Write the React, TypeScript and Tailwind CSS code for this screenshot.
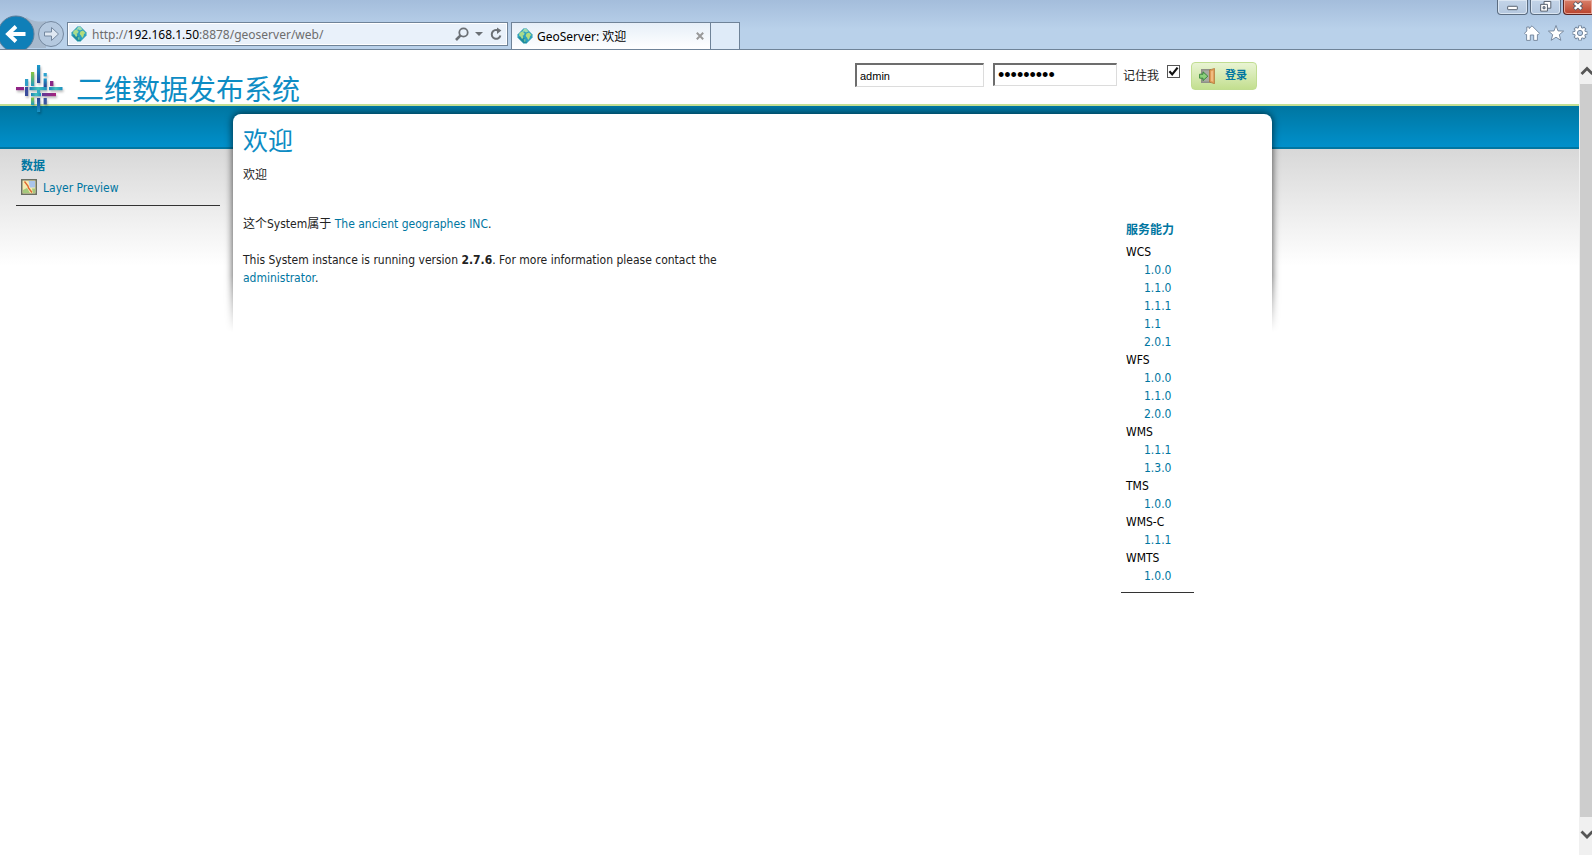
import { useState } from 'react'

type Service = {
  name: string
  versions: string[]
}

const services: Service[] = [
  { name: 'WCS', versions: ['1.0.0', '1.1.0', '1.1.1', '1.1', '2.0.1'] },
  { name: 'WFS', versions: ['1.0.0', '1.1.0', '2.0.0'] },
  { name: 'WMS', versions: ['1.1.1', '1.3.0'] },
  { name: 'TMS', versions: ['1.0.0'] },
  { name: 'WMS-C', versions: ['1.1.1'] },
  { name: 'WMTS', versions: ['1.0.0'] },
]

function GlobeIcon() {
  return (
    <svg viewBox="0 0 16 16" className="size-4 shrink-0" aria-hidden="true">
      <path d="M6.5 0.6 H9.5 L15.4 6.5 V9.5 L9.5 15.4 H6.5 L0.6 9.5 V6.5 Z" fill="#2b9fc0" stroke="#7fc3cd" strokeWidth="0.8" strokeLinejoin="round" />
      <path d="M6.5 9 L10 15 H6.5 L1 9.5 Z" fill="#1f8a9c" />
      <path d="M7 1 H9.5 L11.5 3.5 L9 4.5 L7.5 3.5 L5 4 Z" fill="#9edcae" />
      <path d="M2.5 5 L5 3.5 L7.6 5 L7 7.2 L5.6 7.6 L6.4 9.8 L5 11 L3.5 8.5 L2 7.5 Z" fill="#a9dc8c" />
      <path d="M9.5 5.5 L12 4.5 L14.5 7 L13 8 L12.6 10 L11.2 12 L10 9.6 L8.6 8 Z" fill="#b4dc7c" />
      <path d="M6.8 11 L8.6 11.6 L8.4 14 L7 13.4 Z" fill="#6fc59a" />
    </svg>
  )
}

function Logo() {
  return (
    <svg viewBox="0 0 48 48" className="size-12 drop-shadow-[1px_2px_1px_rgba(0,0,0,0.25)]" aria-hidden="true">
      <defs>
        <linearGradient id="down" x1="0" y1="0" x2="0" y2="1">
          <stop offset="0" stopColor="#1a9ccb" />
          <stop offset="1" stopColor="#2a4596" />
        </linearGradient>
        <linearGradient id="up" x1="0" y1="0" x2="0" y2="1">
          <stop offset="0" stopColor="#2f3f93" />
          <stop offset="1" stopColor="#1795c6" />
        </linearGradient>
        <linearGradient id="green" x1="0" y1="0" x2="0" y2="1">
          <stop offset="0" stopColor="#8cc63f" />
          <stop offset="1" stopColor="#1b9bc0" />
        </linearGradient>
        <linearGradient id="plum" x1="0" y1="0" x2="1" y2="0">
          <stop offset="0" stopColor="#5c3a98" />
          <stop offset="1" stopColor="#a8227c" />
        </linearGradient>
        <linearGradient id="teal" x1="0" y1="0" x2="1" y2="0">
          <stop offset="0" stopColor="#1c7fb6" />
          <stop offset="0.5" stopColor="#45c3bb" />
          <stop offset="1" stopColor="#1c8fc0" />
        </linearGradient>
      </defs>
      <rect x="21" y="0" width="3.2" height="18" fill="url(#down)" />
      <rect x="15" y="7" width="3.2" height="14" fill="url(#green)" />
      <rect x="9" y="14" width="3.2" height="7" fill="#2f9fc8" />
      <rect x="27.6" y="8" width="3.2" height="3.4" fill="#2fa3cf" />
      <rect x="27.6" y="13.5" width="3.2" height="8.5" fill="url(#down)" />
      <rect x="34" y="16" width="3.4" height="5" fill="#8a2a86" />
      <rect x="0" y="22" width="8" height="3.2" fill="#8f2485" />
      <rect x="9" y="22" width="3.2" height="9" fill="#3a4c9c" />
      <rect x="13.5" y="22" width="17.3" height="3.2" fill="url(#teal)" />
      <rect x="33" y="22" width="13.5" height="3.2" fill="url(#teal)" />
      <rect x="15" y="28" width="10" height="3.2" fill="url(#teal)" />
      <rect x="26" y="28" width="14" height="3.2" fill="url(#plum)" />
      <rect x="21" y="25" width="3.2" height="3" fill="#38a9c4" />
      <rect x="15" y="32.5" width="3.2" height="7.5" fill="url(#green)" />
      <rect x="21" y="33" width="3.2" height="14" fill="url(#up)" />
      <rect x="27.6" y="33" width="3.2" height="6.5" fill="#3a55a0" />
    </svg>
  )
}

function LayersIcon() {
  return (
    <svg viewBox="0 0 16 16" className="size-4 shrink-0" aria-hidden="true">
      <rect x="0.75" y="0.75" width="14.5" height="14.5" fill="#f5ebb0" stroke="#6a7064" strokeWidth="1.5" />
      <path d="M7.5 2 H14 V8.5 H9 Z" fill="#a9c4ea" />
      <path d="M2 11 L6 9 L9 14 H2 Z" fill="#a5c97c" />
      <path d="M11 9.5 H14 V14 H12 Z" fill="#a5c97c" />
      <path d="M3.5 2.5 L7 7 L7.5 9 L11 13.5" fill="none" stroke="#e0672f" strokeWidth="1.4" />
    </svg>
  )
}

function DoorIcon() {
  return (
    <svg viewBox="0 0 16 16" className="size-4 shrink-0" aria-hidden="true">
      <path d="M2 1 H12 V15 H2 Z" fill="#8f9087" />
      <path d="M3.5 2.5 H10.5 V13.5 H3.5 Z" fill="#a9aba2" />
      <path d="M10.5 2 L15.5 0.4 V15.8 L10.5 14 Z" fill="#dd9a55" stroke="#a8682c" strokeWidth="0.6" />
      <path d="M12 3.2 L14.2 2.4 V13.8 L12 13 Z" fill="#f0bb80" />
      <path d="M0.6 6.2 H4 V3.8 L8.8 8.2 L4 12.6 V10.2 H0.6 Z" fill="#8cd07c" stroke="#2f8034" strokeWidth="0.9" />
    </svg>
  )
}

function BrowserBar() {
  return (
    <div className="flex h-[50px] shrink-0 items-end overflow-hidden border-b border-[#6f8398] bg-linear-to-b from-[#a4bddb] to-[#b9d1ea] to-60% font-['Noto_Sans','Noto_Sans_CJK_SC',sans-serif]">
      <svg viewBox="0 0 67 35" className="h-[35px] w-[67px] shrink-0" aria-hidden="true">
        <path d="M26 3 C34 8 38 8 46 7 L46 34 L26 34 Z" fill="#a7b9cd" />
        <circle cx="16" cy="20" r="18" fill="#0f7fb8" stroke="#5f7f9b" />
        <path d="M25.5 20 H9 M16 12.5 L8 20 L16 27.5" fill="none" stroke="#fff" strokeWidth="3.8" />
        <circle cx="51" cy="20" r="12.5" fill="#b5c9df" stroke="#74889f" />
        <path d="M44.5 18 H51.5 V13.5 L58.5 20 L51.5 26.5 V22 H44.5 Z" fill="#dfe8f2" stroke="#74889f" />
      </svg>
      <div className="mb-[3px] flex h-6 w-[441px] shrink-0 items-center border border-[#6f8398] bg-[#e9f1fa] pr-1 pl-[3px] shadow-[inset_0_0_0_1px_#fff]">
        <GlobeIcon />
        <div className="ml-[5px] flex-1 pt-px text-xs text-[#6d6d6d]">
          http://<span className="text-black">192.168.1.50</span>:8878/geoserver/web/
        </div>
        <button type="button" aria-label="Search">
          <svg viewBox="0 0 14 14" className="size-3.5" aria-hidden="true">
            <circle cx="8.5" cy="5.5" r="4.2" fill="none" stroke="#6b7075" strokeWidth="1.8" />
            <path d="M5.8 8.2 L1 13" stroke="#6b7075" strokeWidth="2.6" />
          </svg>
        </button>
        <button type="button" aria-label="Show address list" className="ml-1.5">
          <svg viewBox="0 0 8 4" className="h-1 w-2" aria-hidden="true">
            <path d="M0 0 H8 L4 4 Z" fill="#6b7075" />
          </svg>
        </button>
        <button type="button" aria-label="Refresh" className="ml-1.5">
          <svg viewBox="0 0 14 14" className="size-3.5" aria-hidden="true">
            <path d="M9.4 3.6 A4.4 4.4 0 1 0 11.4 8.5" fill="none" stroke="#6b7075" strokeWidth="2" />
            <path d="M8 0.4 L12.4 3.6 L8 7 Z" fill="#6b7075" />
          </svg>
        </button>
      </div>
      <div className="ml-[3px] flex h-[27px] w-[200px] shrink-0 items-center border border-b-0 border-[#6f8398] bg-linear-to-b from-[#e6eff8] to-white pr-1.5 pl-[5px]">
        <GlobeIcon />
        <span className="ml-1 flex-1 pt-px text-xs text-black">GeoServer: 欢迎</span>
        <button type="button" aria-label="Close tab">
          <svg viewBox="0 0 8 8" className="size-2" aria-hidden="true">
            <path d="M0.8 0.8 L7.2 7.2 M7.2 0.8 L0.8 7.2" stroke="#999" strokeWidth="2" />
          </svg>
        </button>
      </div>
      <button
        type="button"
        aria-label="New tab"
        className="h-[27px] w-[29px] shrink-0 border border-b-0 border-l-0 border-[#6f8398] bg-[#dfebf8]"
      />
      <div className="ml-auto flex h-full shrink-0 flex-col items-end justify-between">
        <div className="flex gap-0.5">
          <button type="button" aria-label="Minimize" className="h-[15px] w-[31px] rounded-b border border-t-0 border-[#5b6c80] bg-linear-to-b from-[#c3d4e8] to-[#b4c7de] shadow-[inset_0_0_0_1px_#dbe6f2]">
            <svg viewBox="0 0 30 14" className="block" aria-hidden="true">
              <rect x="10" y="6.5" width="10" height="3.5" rx="0.5" fill="#fff" stroke="#535d6c" />
            </svg>
          </button>
          <button type="button" aria-label="Restore" className="h-[15px] w-[31px] rounded-b border border-t-0 border-[#5b6c80] bg-linear-to-b from-[#c3d4e8] to-[#b4c7de] shadow-[inset_0_0_0_1px_#dbe6f2]">
            <svg viewBox="0 0 30 14" className="block" aria-hidden="true">
              <path d="M13.5 1.5 H20.5 V8.5 H13.5 Z" fill="#fff" stroke="#535d6c" />
              <path d="M10 4.5 H17 V11.5 H10 Z" fill="#fff" stroke="#535d6c" />
              <path d="M12.5 7 H14.5 V9 H12.5 Z" fill="#b4c7de" stroke="#535d6c" />
            </svg>
          </button>
          <button type="button" aria-label="Close" className="h-[15px] w-[29px] rounded-bl border border-t-0 border-r-0 border-[#5a2320] bg-linear-to-b from-[#d9806a] to-[#b8402a] shadow-[inset_0_0_0_1px_#e7a596]">
            <svg viewBox="0 0 30 14" className="block" aria-hidden="true">
              <path d="M11 3 L19 10 M19 3 L11 10" stroke="#535d6c" strokeWidth="4.4" />
              <path d="M11.5 3.4 L18.5 9.6 M18.5 3.4 L11.5 9.6" stroke="#fff" strokeWidth="2.6" />
            </svg>
          </button>
        </div>
        <div className="mr-1 mb-2 flex gap-2">
          <button type="button" aria-label="Home">
            <svg viewBox="0 0 16 16" className="size-4" aria-hidden="true">
              <path d="M8 0.8 L15.5 8.3 L14.2 9.6 H13.4 V15.4 H9.7 V10 H6.3 V15.4 H2.6 V9.6 H1.8 L0.5 8.3 L2.8 6 V2 H5.2 V3.6 Z" fill="#fff" stroke="#6f8197" strokeWidth="0.9" />
            </svg>
          </button>
          <button type="button" aria-label="Favorites">
            <svg viewBox="0 0 16 16" className="size-4" aria-hidden="true">
              <path d="M8 0.5 L10 5.9 L15.6 6.1 L11.3 9.7 L12.8 15.3 L8 12.2 L3.2 15.3 L4.7 9.7 L0.4 6.1 L6 5.9 Z" fill="#fff" stroke="#6f8197" strokeWidth="0.9" />
            </svg>
          </button>
          <button type="button" aria-label="Tools">
            <svg viewBox="0 0 16 16" className="size-4" aria-hidden="true">
              <path d="M8 0.6 V15.4 M0.6 8 H15.4 M2.8 2.8 L13.2 13.2 M13.2 2.8 L2.8 13.2" stroke="#6f8197" strokeWidth="3.6" />
              <circle cx="8" cy="8" r="5.6" fill="#fff" stroke="#6f8197" strokeWidth="0.9" />
              <path d="M8 1.3 V14.7 M1.3 8 H14.7 M3.4 3.4 L12.6 12.6 M12.6 3.4 L3.4 12.6" stroke="#fff" strokeWidth="2" />
              <circle cx="8" cy="8" r="2.6" fill="#b9d0eb" stroke="#6f8197" strokeWidth="1" />
            </svg>
          </button>
        </div>
      </div>
    </div>
  )
}

function LoginForm() {
  const [username, setUsername] = useState('admin')
  const [password, setPassword] = useState('geoserver')
  const [remember, setRemember] = useState(true)

  return (
    <form className="flex items-start pt-3" onSubmit={(e) => e.preventDefault()}>
      <input
        type="text"
        aria-label="Username"
        value={username}
        onChange={(e) => setUsername(e.target.value)}
        className="mt-px h-6 w-[129px] border-t-2 border-r border-b border-l-2 border-t-[#6d6d6d] border-r-[#dcdcdc] border-b-[#dcdcdc] border-l-[#6d6d6d] bg-white px-[3px] font-['Liberation_Sans',sans-serif] text-[11px] text-black"
      />
      <input
        type="password"
        aria-label="Password"
        value={password}
        onChange={(e) => setPassword(e.target.value)}
        className="mt-px ml-[9px] h-[23px] w-[124px] border-t-2 border-r border-b border-l-2 border-t-[#6d6d6d] border-r-[#dcdcdc] border-b-[#dcdcdc] border-l-[#6d6d6d] bg-white px-[3px] font-['Liberation_Sans',sans-serif] text-lg leading-5 text-black"
      />
      <label htmlFor="remember" className="mt-[5px] ml-1.5 leading-[18px] text-[#222]">
        记住我
      </label>
      <span className="relative mt-[3px] ml-2 size-[13px]">
        <input
          id="remember"
          type="checkbox"
          checked={remember}
          onChange={(e) => setRemember(e.target.checked)}
          className="block size-[13px] appearance-none border border-[#555] bg-white"
        />
        {remember && (
          <svg viewBox="0 0 13 13" className="pointer-events-none absolute inset-0 size-[13px]" aria-hidden="true">
            <path d="M2.4 6.2 L5.2 9.4 L10.6 2.6" fill="none" stroke="#111" strokeWidth="2.2" />
          </svg>
        )}
      </span>
      <button
        type="submit"
        className="ml-[11px] flex h-7 items-center rounded border border-[#c1dd92] bg-linear-to-b from-[#e9f4d3] to-[#c3df8f] pr-[9px] pl-[7px] text-[11px] font-bold text-[#0076a1]"
      >
        <DoorIcon />
        <span className="ml-[10px]">登录</span>
      </button>
    </form>
  )
}

function ServiceList() {
  return (
    <aside className="mr-[78px] w-[73px] shrink-0 border-b border-[#333] pt-[6px] pb-[7px] pl-[5px] leading-[18px]">
      <h3 className="mb-1 font-bold whitespace-nowrap text-[#0076a1]">服务能力</h3>
      <ul>
        {services.map((service) => (
          <li key={service.name} className="text-black">
            {service.name}
            <ul className="pl-[18px]">
              {service.versions.map((version) => (
                <li key={version}>
                  <a href="#" className="text-[#0076a1]">
                    {version}
                  </a>
                </li>
              ))}
            </ul>
          </li>
        ))}
      </ul>
    </aside>
  )
}

function ScrollBar() {
  return (
    <div className="flex w-[13px] shrink-0 flex-col overflow-hidden bg-[#f0f0f0] pl-px">
      <svg viewBox="0 0 12 34" className="h-[34px] w-3 shrink-0" aria-hidden="true">
        <path d="M1.5 24 L7 18.5 L12.5 24" fill="none" stroke="#555" strokeWidth="2.8" />
      </svg>
      <div className="flex-1 bg-[#cdcdcd]" />
      <svg viewBox="0 0 12 38" className="h-[38px] w-3 shrink-0" aria-hidden="true">
        <path d="M1.5 14.5 L7 20 L12.5 14.5" fill="none" stroke="#555" strokeWidth="2.8" />
      </svg>
    </div>
  )
}

export default function App() {
  return (
    <div className="flex h-screen flex-col bg-white font-['DejaVu_Sans_Condensed','Noto_Sans_CJK_SC',sans-serif] text-xs text-[#222]">
      <BrowserBar />
      <div className="flex min-h-0 flex-1">
        <div className="flex min-w-0 flex-1 flex-col">
          <header className="relative z-10 flex h-14 shrink-0 justify-between border-b-2 border-[#c3df94] pr-[322px] pl-4">
            <div className="flex items-start">
              <div className="pt-[15px]">
                <Logo />
              </div>
              <h1 className="ml-3 pt-[18px] font-['Noto_Sans_CJK_SC',sans-serif] text-[28px] leading-10 whitespace-nowrap text-[#0d8cc4]">
                二维数据发布系统
              </h1>
            </div>
            <LoginForm />
          </header>

          <div className="flex flex-1 bg-[linear-gradient(to_bottom,#0076a1_0,#0090cb_41px,#0076a1_41px,#0076a1_43px,#d8d8d8_43px,#fff_160px)]">
            <nav className="w-[233px] shrink-0 pt-[51px] pr-[13px] pl-4">
              <div className="border-b border-[#333] pb-2 pl-[5px]">
                <h3 className="leading-[18px] font-bold text-[#0076a1]">数据</h3>
                <a href="#" className="mt-1 flex items-start leading-[18px] text-[#0076a1]">
                  <LayersIcon />
                  <span className="ml-1.5">Layer Preview</span>
                </a>
              </div>
            </nav>

            <div className="relative mt-2 mr-[307px] flex-1">
              <div className="pointer-events-none absolute -inset-x-3 -top-2 h-[226px] overflow-hidden px-3 pt-2 [mask-image:linear-gradient(to_bottom,#000_75%,transparent)]">
                <div className="h-[240px] rounded-t-lg shadow-[0_0_7px_1px_rgba(0,0,0,0.6)]" />
              </div>
              <main className="relative h-full rounded-t-lg bg-white pt-3 pl-2.5">
                <h2 className="text-[25px] leading-8 text-[#0d8cc4]">欢迎</h2>
                <p className="mt-2 leading-[18px]">欢迎</p>
                <div className="mt-[31px] flex items-start justify-between leading-[18px]">
                  <div className="max-w-[500px]">
                    <p>
                      这个System属于{' '}
                      <a href="#" className="text-[#0076a1]">
                        The ancient geographes INC
                      </a>
                      .
                    </p>
                    <p className="mt-[18px]">
                      This System instance is running version <strong>2.7.6</strong>. For more information please contact the{' '}
                      <a href="#" className="text-[#0076a1]">
                        administrator
                      </a>
                      .
                    </p>
                  </div>
                  <ServiceList />
                </div>
              </main>
            </div>
          </div>
        </div>
        <ScrollBar />
      </div>
    </div>
  )
}
